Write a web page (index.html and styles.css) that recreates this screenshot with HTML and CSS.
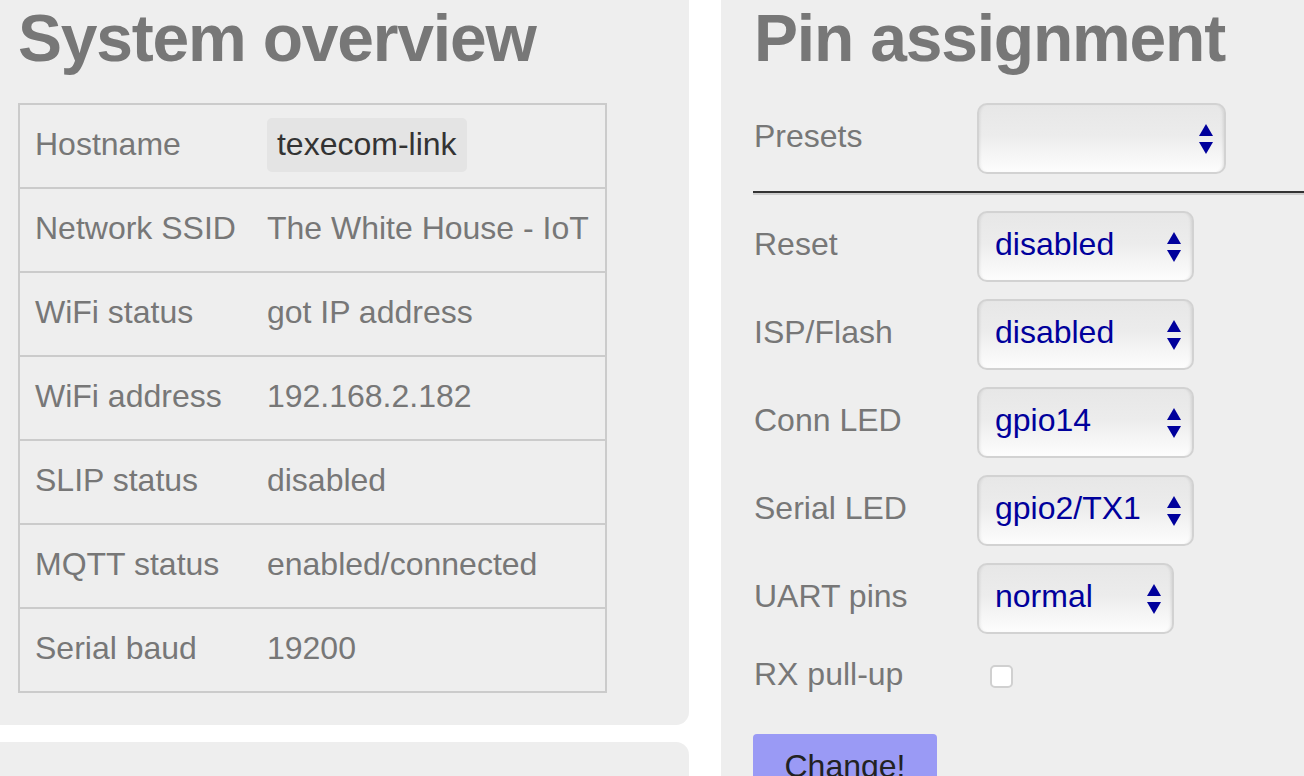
FILE: index.html
```html
<!DOCTYPE html>
<html lang="en">
<head>
<meta charset="utf-8">
<title>esp-link</title>
<link rel="stylesheet" href="styles.css">
</head>
<body>
<div class="page">
  <div class="left-col">
    <section class="card card-overview">
      <h1 class="title">System overview</h1>
      <table class="info">
        <tbody>
          <tr><td class="key">Hostname</td><td class="val"><span class="host">texecom-link</span></td></tr>
          <tr><td class="key">Network SSID</td><td class="val">The White House - IoT</td></tr>
          <tr><td class="key">WiFi status</td><td class="val">got IP address</td></tr>
          <tr><td class="key">WiFi address</td><td class="val">192.168.2.182</td></tr>
          <tr><td class="key">SLIP status</td><td class="val">disabled</td></tr>
          <tr><td class="key">MQTT status</td><td class="val">enabled/connected</td></tr>
          <tr><td class="key">Serial baud</td><td class="val">19200</td></tr>
        </tbody>
      </table>
    </section>
    <section class="card card-next"></section>
  </div>

  <section class="card card-pins">
    <h1 class="title">Pin assignment</h1>
    <form class="pin-form">
      <div class="row">
        <label class="lbl">Presets</label>
        <div class="sel sel-presets">
          <span class="sel-text"></span>
          <svg class="arrows" width="14" height="30" viewBox="0 0 14 30"><polygon points="7,0 14,12 0,12"/><polygon points="0,18 14,18 7,30"/></svg>
        </div>
      </div>
      <hr class="rule">
      <div class="row">
        <label class="lbl">Reset</label>
        <div class="sel sel-mid">
          <span class="sel-text">disabled</span>
          <svg class="arrows" width="14" height="30" viewBox="0 0 14 30"><polygon points="7,0 14,12 0,12"/><polygon points="0,18 14,18 7,30"/></svg>
        </div>
      </div>
      <div class="row">
        <label class="lbl">ISP/Flash</label>
        <div class="sel sel-mid">
          <span class="sel-text">disabled</span>
          <svg class="arrows" width="14" height="30" viewBox="0 0 14 30"><polygon points="7,0 14,12 0,12"/><polygon points="0,18 14,18 7,30"/></svg>
        </div>
      </div>
      <div class="row">
        <label class="lbl">Conn LED</label>
        <div class="sel sel-mid">
          <span class="sel-text">gpio14</span>
          <svg class="arrows" width="14" height="30" viewBox="0 0 14 30"><polygon points="7,0 14,12 0,12"/><polygon points="0,18 14,18 7,30"/></svg>
        </div>
      </div>
      <div class="row">
        <label class="lbl">Serial LED</label>
        <div class="sel sel-mid">
          <span class="sel-text">gpio2/TX1</span>
          <svg class="arrows" width="14" height="30" viewBox="0 0 14 30"><polygon points="7,0 14,12 0,12"/><polygon points="0,18 14,18 7,30"/></svg>
        </div>
      </div>
      <div class="row">
        <label class="lbl">UART pins</label>
        <div class="sel sel-small">
          <span class="sel-text">normal</span>
          <svg class="arrows" width="14" height="30" viewBox="0 0 14 30"><polygon points="7,0 14,12 0,12"/><polygon points="0,18 14,18 7,30"/></svg>
        </div>
      </div>
      <div class="row row-check">
        <label class="lbl">RX pull-up</label>
        <input class="check" type="checkbox">
      </div>
      <button class="btn" type="button">Change!</button>
    </form>
  </section>
</div>
</body>
</html>
```

FILE: styles.css
```css
html, body {
  margin: 0;
  padding: 0;
  background: #fff;
}

body {
  width: 1304px;
  height: 776px;
  overflow: hidden;
  font-family: "Liberation Sans", Arial, Helvetica, sans-serif;
  font-size: 32px;
  color: #777;
}

.page {
  display: flex;
  gap: 32px;
  align-items: flex-start;
}

.left-col {
  width: 689px;
  flex: none;
  display: flex;
  flex-direction: column;
  gap: 17px;
}

.card {
  background: #eee;
}

.card-overview {
  border-radius: 0 0 13px 0;
  padding: 0 0 32px 18px;
}

.card-next {
  height: 120px;
  border-radius: 0 13px 0 0;
}

.title {
  margin: -2px 0 25px 0;
  font-size: 66px;
  line-height: 80px;
  font-weight: bold;
  letter-spacing: -1.2px;
  color: #777;
}

.info {
  width: 588px;
  border-collapse: collapse;
  border: 2px solid #cbcbcb;
}

.info td {
  height: 78px;
  padding: 0 16px 4px 15px;
  border-top: 2px solid #cbcbcb;
  vertical-align: middle;
  line-height: 37px;
  white-space: nowrap;
}

.info .key {
  width: 201px;
}

.info .val {
  color: #777;
}

.host {
  display: inline-block;
  background: #e4e4e4;
  color: #333;
  border-radius: 5px;
  padding: 8px 10px 9px 10px;
  margin-top: 2px;
}

.card-pins {
  flex: 1 0 583px;
  min-height: 900px;
  padding-left: 33px;
}

.pin-form {
  display: flex;
  flex-direction: column;
  align-items: flex-start;
}

.row {
  display: flex;
  align-items: center;
  height: 71px;
  margin-bottom: 17px;
}

.lbl {
  width: 223px;
  flex: none;
  line-height: 37px;
  padding-bottom: 4px;
  color: #777;
}

.rule {
  align-self: stretch;
  margin: 0 0 16px -1px;
  height: 0;
  border: 0;
  border-top: 2px solid #333;
  border-bottom: 2px solid #cdcdcd;
}

.sel {
  box-sizing: border-box;
  height: 71px;
  display: flex;
  align-items: center;
  justify-content: space-between;
  padding: 0 11px 0 16px;
  border: 2px solid #d2d2d2;
  border-radius: 10px;
  background: linear-gradient(#e7e7e7 0%, #ececec 45%, #f4f4f4 70%, #fdfdfd 100%);
  box-shadow: inset 3px 0 3px -2px rgba(0,0,0,0.08), inset -3px 0 3px -2px rgba(0,0,0,0.1);
  color: #00009c;
}

.sel-text {
  line-height: 37px;
  padding-bottom: 4px;
  white-space: nowrap;
}

.sel-presets { width: 249px; }
.sel-mid { width: 217px; }
.sel-small { width: 197px; }

.arrows {
  fill: #00009c;
  flex: none;
}

.row-check {
  height: 50px;
  margin-bottom: 33px;
}

.check {
  appearance: none;
  -webkit-appearance: none;
  box-sizing: border-box;
  width: 23px;
  height: 23px;
  margin: 0 0 0 13px;
  background: #fff;
  border: 2px solid #d0d0d0;
  border-radius: 5px;
}

.btn {
  margin-left: -1px;
  width: 184px;
  padding: 14px 0 20px 0;
  border: 0;
  border-radius: 4px;
  background: #9a9af5;
  color: #222;
  font-family: "Liberation Sans", Arial, Helvetica, sans-serif;
  font-size: 32px;
  line-height: 37px;
}
```
